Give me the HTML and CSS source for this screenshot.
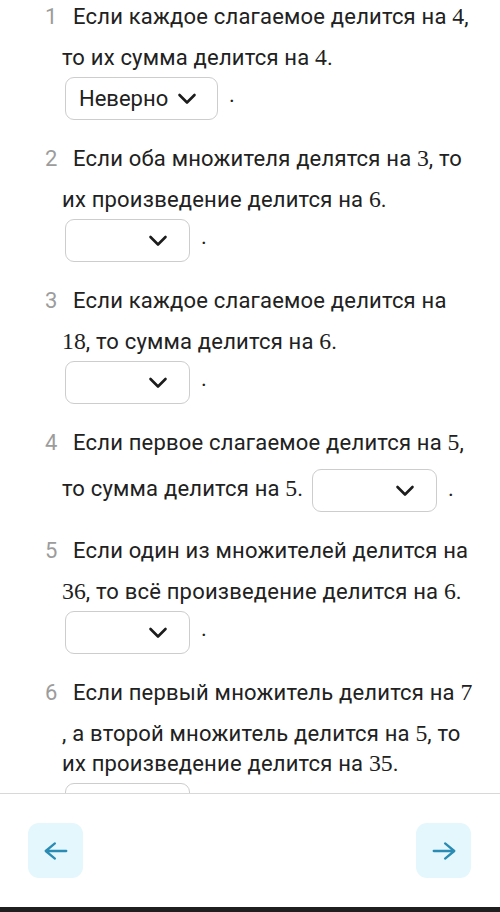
FILE: index.html
```html
<!DOCTYPE html>
<html lang="ru">
<head>
<meta charset="utf-8">
<title>Задания</title>
<link rel="stylesheet" href="styles.css">
</head>
<body>
<div class="page">
  <main class="content">
    <p class="task"><span class="num">1</span>Если каждое слагаемое делится на <span class="m">4</span>,<br>то их сумма делится на <span class="m">4</span>.<br><span class="sel sel-block sel-wide"><span class="sel-text">Неверно</span><svg class="chev" viewBox="0 0 20 12" width="20" height="12"><polyline points="2.5,2 10,9.5 17.5,2"/></svg></span><span class="dot">.</span></p>

    <p class="task"><span class="num">2</span>Если оба множителя делятся на <span class="m">3</span>, то<br>их произведение делится на <span class="m">6</span>.<br><span class="sel sel-block"><svg class="chev" viewBox="0 0 20 12" width="20" height="12"><polyline points="2.5,2 10,9.5 17.5,2"/></svg></span><span class="dot">.</span></p>

    <p class="task"><span class="num">3</span>Если каждое слагаемое делится на<br><span class="m">18</span>, то сумма делится на <span class="m">6</span>.<br><span class="sel sel-block"><svg class="chev" viewBox="0 0 20 12" width="20" height="12"><polyline points="2.5,2 10,9.5 17.5,2"/></svg></span><span class="dot">.</span></p>

    <p class="task"><span class="num">4</span>Если первое слагаемое делится на <span class="m">5</span>,<br>то сумма делится на <span class="m">5</span>. <span class="sel sel-inline"><svg class="chev" viewBox="0 0 20 12" width="20" height="12"><polyline points="2.5,2 10,9.5 17.5,2"/></svg></span><span class="dot">.</span></p>

    <p class="task"><span class="num">5</span>Если один из множителей делится на<br><span class="m">36</span>, то всё произведение делится на <span class="m">6</span>.<br><span class="sel sel-block"><svg class="chev" viewBox="0 0 20 12" width="20" height="12"><polyline points="2.5,2 10,9.5 17.5,2"/></svg></span><span class="dot">.</span></p>

    <p class="task"><span class="num">6</span>Если первый множитель делится на <span class="m">7</span><br>, а второй множитель делится на <span class="m">5</span>, то<br>их произведение делится на <span class="m">35</span>.<br><span class="sel sel-block"><svg class="chev" viewBox="0 0 20 12" width="20" height="12"><polyline points="2.5,2 10,9.5 17.5,2"/></svg></span></p>
  </main>
  <footer class="footer">
    <button class="nav-btn" type="button" aria-label="Назад">
      <svg viewBox="0 0 24 24" width="26" height="26"><path d="M21.5 12H2.5M11 5L2.5 12l8.5 7"/></svg>
    </button>
    <button class="nav-btn" type="button" aria-label="Вперёд">
      <svg viewBox="0 0 24 24" width="26" height="26"><path d="M2.5 12h19M13 5l8.5 7-8.5 7"/></svg>
    </button>
  </footer>
  <div class="bottom-bar"></div>
</div>
</body>
</html>
```

FILE: styles.css
```css
html, body {
  margin: 0;
  padding: 0;
  background: #ffffff;
}

body {
  font-family: Roboto, "Noto Sans", sans-serif;
  color: #212121;
}

.page {
  height: 912px;
  display: flex;
  flex-direction: column;
  overflow: hidden;
}

.content {
  flex: 1;
  min-height: 0;
  overflow: hidden;
  padding-top: 2px;
}

.task {
  margin: 0 0 24px;
  padding-left: 62px;
  font-size: 22px;
  letter-spacing: 0.2px;
  line-height: 30px;
  white-space: nowrap;
  color: #212121;
}

.num {
  display: inline-block;
  width: 28px;
  margin-left: -17px;
  margin-bottom: 11px;
  color: #9c9c9c;
  letter-spacing: 0;
}

.m {
  font-family: "Liberation Serif", "DejaVu Serif", serif;
  font-size: 1.08em;
  line-height: 1;
  letter-spacing: 0;
}

.sel {
  display: inline-flex;
  align-items: center;
  justify-content: flex-end;
  vertical-align: middle;
  box-sizing: border-box;
  width: 125px;
  height: 43px;
  padding: 0 21px 0 13px;
  border: 1.5px solid #cdcdcd;
  border-radius: 9px;
  background: #ffffff;
}

.sel-block {
  margin-left: 3px;
  margin-top: 4px;
}

.sel-inline {
  margin-left: 3px;
}

.sel-wide {
  width: 153px;
  justify-content: flex-start;
  gap: 9px;
}

.sel-text {
  color: #212121;
  line-height: 1;
  letter-spacing: 0;
}

.chev {
  display: block;
  flex: none;
}

.chev polyline {
  fill: none;
  stroke: #1c1c1c;
  stroke-width: 2.6;
  stroke-linecap: round;
  stroke-linejoin: round;
}

.dot {
  margin-left: 11px;
}

.footer {
  flex: none;
  height: 113px;
  border-top: 1px solid #d8d8d8;
  background: #ffffff;
  display: flex;
  align-items: center;
  justify-content: space-between;
  padding: 0 29px 0 28px;
}

.nav-btn {
  width: 55px;
  height: 55px;
  border: none;
  border-radius: 11px;
  background: #e4f7fd;
  display: flex;
  align-items: center;
  justify-content: center;
  padding: 0;
}

.nav-btn path {
  fill: none;
  stroke: #2a8cb2;
  stroke-width: 2.1;
  stroke-linecap: round;
  stroke-linejoin: round;
}

.bottom-bar {
  flex: none;
  height: 5px;
  background: #1f1f1f;
}
```
